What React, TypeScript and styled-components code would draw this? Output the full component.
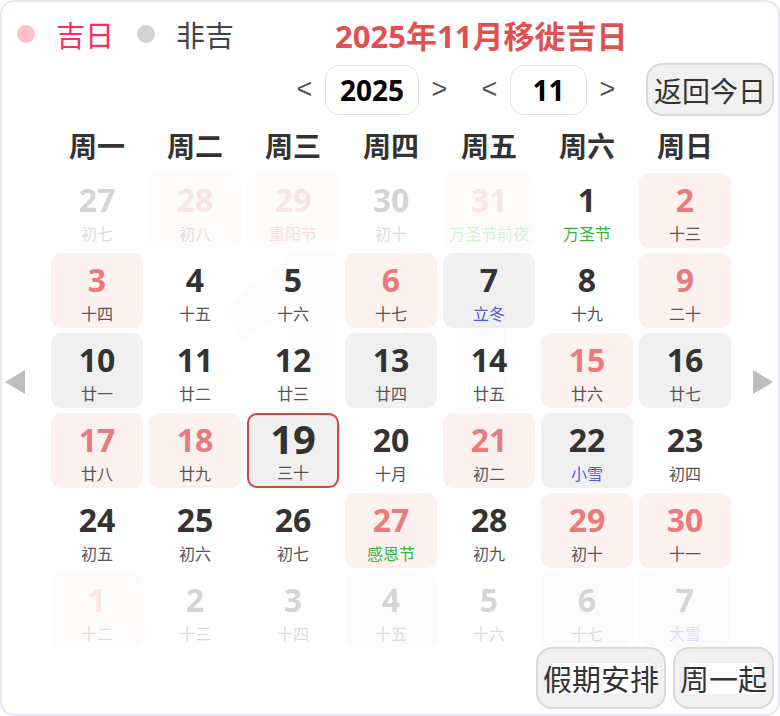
import React from 'react';
import styled, { createGlobalStyle } from 'styled-components';

const GlobalStyle = createGlobalStyle`
  html, body {
    margin: 0;
    padding: 0;
    background: #fff;
  }
  body {
    font-family: "Open Sans", "Noto Sans CJK SC", sans-serif;
  }
`;

type Bg = 'none' | 'pink' | 'grey';
type Tag = 'plain' | 'green' | 'blue' | 'red';

type DayData = {
  d: number;
  l: string;
  bg?: Bg;
  tag?: Tag;
  out?: boolean;
  today?: boolean;
};

const days: DayData[] = [
  { d: 27, l: '初七', out: true },
  { d: 28, l: '初八', bg: 'pink', out: true },
  { d: 29, l: '重阳节', bg: 'pink', tag: 'red', out: true },
  { d: 30, l: '初十', out: true },
  { d: 31, l: '万圣节前夜', bg: 'pink', tag: 'green', out: true },
  { d: 1, l: '万圣节', tag: 'green' },
  { d: 2, l: '十三', bg: 'pink' },

  { d: 3, l: '十四', bg: 'pink' },
  { d: 4, l: '十五' },
  { d: 5, l: '十六' },
  { d: 6, l: '十七', bg: 'pink' },
  { d: 7, l: '立冬', bg: 'grey', tag: 'blue' },
  { d: 8, l: '十九' },
  { d: 9, l: '二十', bg: 'pink' },

  { d: 10, l: '廿一', bg: 'grey' },
  { d: 11, l: '廿二' },
  { d: 12, l: '廿三' },
  { d: 13, l: '廿四', bg: 'grey' },
  { d: 14, l: '廿五' },
  { d: 15, l: '廿六', bg: 'pink' },
  { d: 16, l: '廿七', bg: 'grey' },

  { d: 17, l: '廿八', bg: 'pink' },
  { d: 18, l: '廿九', bg: 'pink' },
  { d: 19, l: '三十', bg: 'grey', today: true },
  { d: 20, l: '十月' },
  { d: 21, l: '初二', bg: 'pink' },
  { d: 22, l: '小雪', bg: 'grey', tag: 'blue' },
  { d: 23, l: '初四' },

  { d: 24, l: '初五' },
  { d: 25, l: '初六' },
  { d: 26, l: '初七' },
  { d: 27, l: '感恩节', bg: 'pink', tag: 'green' },
  { d: 28, l: '初九' },
  { d: 29, l: '初十', bg: 'pink' },
  { d: 30, l: '十一', bg: 'pink' },

  { d: 1, l: '十二', bg: 'pink', out: true },
  { d: 2, l: '十三', out: true },
  { d: 3, l: '十四', out: true },
  { d: 4, l: '十五', bg: 'grey', out: true },
  { d: 5, l: '十六', out: true },
  { d: 6, l: '十七', bg: 'grey', out: true },
  { d: 7, l: '大雪', bg: 'grey', tag: 'blue', out: true },
];

const weekNames = ['周一', '周二', '周三', '周四', '周五', '周六', '周日'];

const bgColors: Record<Bg, string> = {
  none: 'transparent',
  pink: '#fdf1f0',
  grey: '#f0f0f0',
};

const tagColors: Record<Tag, string> = {
  plain: '#555',
  green: '#3cb043',
  blue: '#5555e0',
  red: '#e06060',
};

const Card = styled.div`
  position: relative;
  box-sizing: border-box;
  width: 780px;
  height: 716px;
  border: 2px solid #e6e8f4;
  border-radius: 14px;
  overflow: hidden;
  background: #fff;
`;

const TopRow = styled.div`
  display: flex;
  align-items: center;
  height: 40px;
  margin-top: 12px;
  padding-left: 15px;
`;

const Dot = styled.span<{ $color: string }>`
  width: 18px;
  height: 18px;
  border-radius: 50%;
  background: ${(p) => p.$color};
  margin-right: 21px;
`;

const LegendText = styled.span<{ $color: string }>`
  font-family: "Noto Sans CJK SC", sans-serif;
  font-size: 29px;
  color: ${(p) => p.$color};
  margin-right: 23px;
`;

const Title = styled.h1`
  margin: 0 0 0 78px;
  font-family: "Open Sans", "Noto Sans CJK SC", sans-serif;
  font-size: 31px;
  font-weight: 700;
  color: #e05252;
`;

const NavRow = styled.div`
  display: flex;
  align-items: center;
  justify-content: flex-end;
  margin-top: 9px;
  height: 53px;
  padding-right: 4px;
`;

const Arrow = styled.span`
  font-family: "Liberation Sans", sans-serif;
  font-size: 27px;
  color: #555;
  width: 41px;
  text-align: center;
  line-height: 1;
`;

const ValueBox = styled.div<{ $w: number }>`
  box-sizing: border-box;
  width: ${(p) => p.$w}px;
  height: 50px;
  border: 1px solid #e0e0e4;
  border-radius: 14px;
  display: flex;
  align-items: center;
  justify-content: center;
  font-size: 28px;
  font-weight: 700;
  color: #000;
`;

const NavGroup = styled.div<{ $gap: number }>`
  display: flex;
  align-items: center;
  margin-right: ${(p) => p.$gap}px;
`;

const GreyButton = styled.button`
  position: relative;
  box-sizing: border-box;
  height: 53px;
  padding: 0 6px;
  border: 2px solid #d8d8d8;
  border-radius: 16px;
  background: #f0f0f0;
  font-family: "Noto Sans CJK SC", sans-serif;
  font-size: 28px;
  color: #333;
  cursor: pointer;
`;

const BigButton = styled(GreyButton)`
  height: 62px;
  padding: 0 5px;
  font-size: 29px;
  &::before {
    content: '';
    position: absolute;
    left: 14px;
    right: 14px;
    top: 14px;
    height: 31px;
    background: #fff;
  }
`;

const ButtonLabel = styled.span`
  position: relative;
`;

const Body = styled.div`
  display: flex;
  align-items: stretch;
`;

const Side = styled.div<{ $w: number; $pad: number }>`
  box-sizing: border-box;
  width: ${(p) => p.$w}px;
  padding-left: ${(p) => p.$pad}px;
  display: flex;
  align-items: center;
`;

const Main = styled.div`
  width: 680px;
  position: relative;
`;

const WeekHeader = styled.div`
  display: grid;
  grid-template-columns: repeat(7, 92px);
  column-gap: 6px;
  margin-top: 14px;
  height: 30px;
  margin-bottom: 13px;
`;

const WeekName = styled.div`
  text-align: center;
  font-family: "Noto Sans CJK SC", sans-serif;
  font-size: 28px;
  font-weight: 700;
  line-height: 30px;
  color: #333;
`;

const Grid = styled.div`
  display: grid;
  grid-template-columns: repeat(7, 92px);
  grid-auto-rows: 75px;
  gap: 5px 6px;
  position: relative;
`;

const Watermark = styled.div`
  position: absolute;
  left: 150px;
  top: 20px;
  font-size: 330px;
  font-weight: 700;
  line-height: 1;
  color: rgba(0, 0, 0, 0.01);
  pointer-events: none;
  letter-spacing: -20px;
`;

const Cell = styled.div<{ $bg: Bg; $out: boolean; $today: boolean }>`
  position: relative;
  box-sizing: border-box;
  border-radius: 10px;
  background: ${(p) => bgColors[p.$bg]};
  border: ${(p) => (p.$today ? '2px solid #d9443e' : 'none')};
  opacity: ${(p) => (p.$out ? 0.2 : 1)};
  display: flex;
  flex-direction: column;
  align-items: center;
`;

const Num = styled.div<{ $red: boolean; $today: boolean }>`
  margin-top: ${(p) => (p.$today ? 5 : 8)}px;
  height: 38px;
  line-height: 38px;
  font-family: "Open Sans", sans-serif;
  font-size: ${(p) => (p.$today ? 40 : 32)}px;
  font-weight: 700;
  color: ${(p) => (p.$red ? '#e87b7b' : '#333')};
`;

const Lunar = styled.div<{ $tag: Tag }>`
  margin-top: 3px;
  line-height: 22px;
  font-family: "Noto Sans CJK SC", sans-serif;
  font-size: 16px;
  color: ${(p) => tagColors[p.$tag]};
  white-space: nowrap;
`;

const BottomRow = styled.div`
  display: flex;
  justify-content: flex-end;
  gap: 7px;
  padding-right: 4px;
  margin-top: -1px;
`;

const Triangle: React.FC<{ dir: 'left' | 'right' }> = ({ dir }) => (
  <svg width="20" height="24" viewBox="0 0 20 24">
    <polygon
      points={dir === 'left' ? '0,12 20,0 20,24' : '0,0 20,12 0,24'}
      fill="#bdbdbd"
    />
  </svg>
);

export default function App() {
  return (
    <>
      <GlobalStyle />
      <Card>
        <TopRow>
          <Dot $color="#ffc0cb" />
          <LegendText $color="#ff2d5f">吉日</LegendText>
          <Dot $color="#d3d3d3" />
          <LegendText $color="#444">非吉</LegendText>
          <Title>2025年11月移徙吉日</Title>
        </TopRow>

        <NavRow>
          <NavGroup $gap={9}>
            <Arrow>&lt;</Arrow>
            <ValueBox $w={94}>2025</ValueBox>
            <Arrow>&gt;</Arrow>
          </NavGroup>
          <NavGroup $gap={18}>
            <Arrow>&lt;</Arrow>
            <ValueBox $w={77}>11</ValueBox>
            <Arrow>&gt;</Arrow>
          </NavGroup>
          <GreyButton>返回今日</GreyButton>
        </NavRow>

        <Body>
          <Side $w={49} $pad={3}>
            <Triangle dir="left" />
          </Side>
          <Main>
            <WeekHeader>
              {weekNames.map((w) => (
                <WeekName key={w}>{w}</WeekName>
              ))}
            </WeekHeader>
            <Grid>
              <Watermark>11</Watermark>
              {days.map((c, i) => (
                <Cell key={i} $bg={c.bg ?? 'none'} $out={!!c.out} $today={!!c.today}>
                  <Num $red={c.bg === 'pink'} $today={!!c.today}>
                    {c.d}
                  </Num>
                  <Lunar $tag={c.tag ?? 'plain'}>{c.l}</Lunar>
                </Cell>
              ))}
            </Grid>
          </Main>
          <Side $w={45} $pad={22}>
            <Triangle dir="right" />
          </Side>
        </Body>

        <BottomRow>
          <BigButton>
            <ButtonLabel>假期安排</ButtonLabel>
          </BigButton>
          <BigButton>
            <ButtonLabel>周一起</ButtonLabel>
          </BigButton>
        </BottomRow>
      </Card>
    </>
  );
}
